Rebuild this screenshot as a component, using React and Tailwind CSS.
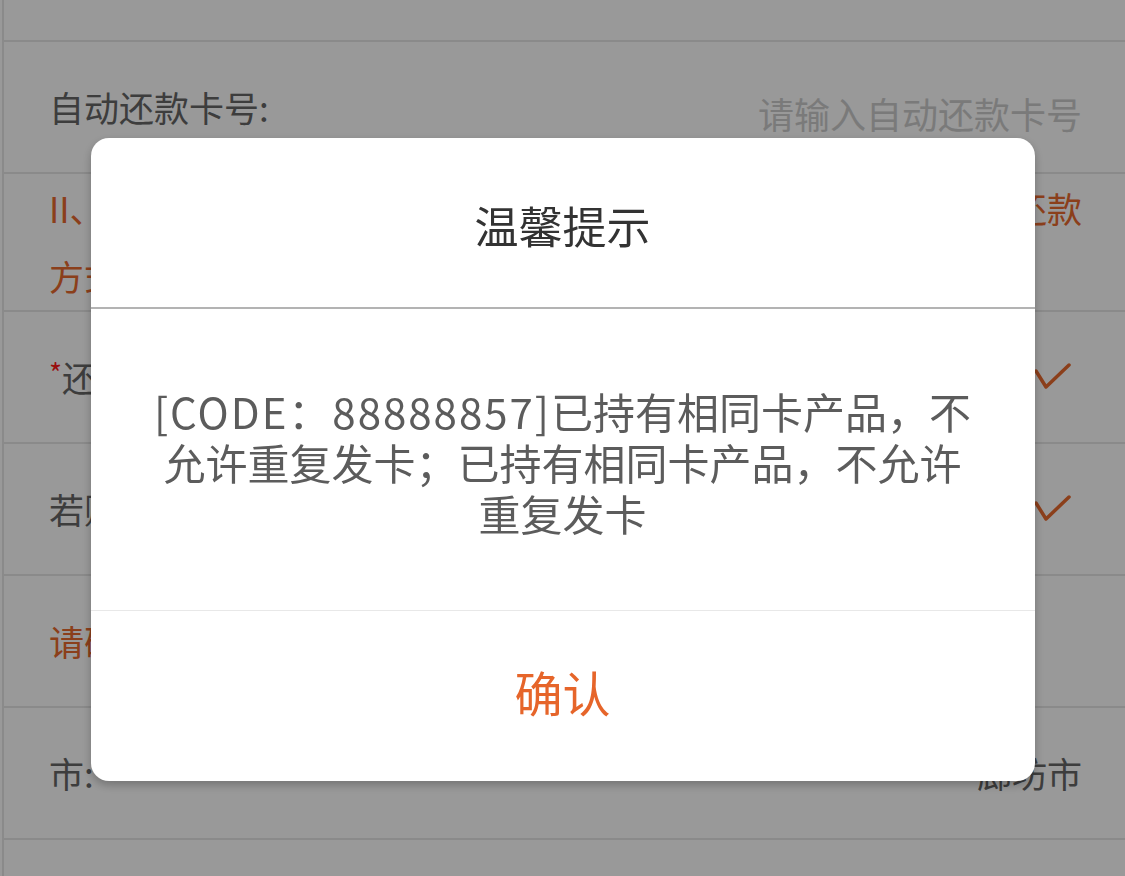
import { useState } from 'react'

const rows = [
  { label: '自动还款卡号:', placeholder: '请输入自动还款卡号' },
]

function CheckMark() {
  return (
    <svg width="38" height="28" viewBox="0 0 38 28" fill="none" className="mr-[10px]">
      <polyline points="2,8 12,24 35,2" stroke="#e8692e" strokeWidth="3.5" strokeLinecap="round" strokeLinejoin="round" />
    </svg>
  )
}

function Row({ children }) {
  return (
    <div className="h-[132px] flex items-center justify-between pl-[45px] pr-[43px] border-b-2 border-[#e6e6e6]">
      {children}
    </div>
  )
}

export default function App() {
  const [open, setOpen] = useState(true)

  return (
    <div className="relative h-[876px] overflow-hidden bg-white font-['Noto_Sans_CJK_SC',sans-serif] text-[35px] text-[#666]">
      <div className="ml-[2px] border-l-2 border-[#e6e6e6] h-full">
        <div className="h-[42px] border-b-2 border-[#e6e6e6]" />

        {rows.map((r) => (
          <Row key={r.label}>
            <span>{r.label}</span>
            <span className="text-[36px] text-[#cccccc] translate-y-[6px]">{r.placeholder}</span>
          </Row>
        ))}

        <div className="h-[138px] pl-[45px] pr-[43px] border-b-2 border-[#e6e6e6] text-[#e8692e] leading-[68px]">
          <div className="flex justify-between">
            <span>II、若需开通自动还款功能，请选择约定</span>
            <span>还款</span>
          </div>
          <div>方式及自动还款卡号</div>
        </div>

        <Row>
          <span>
            <span className="text-[#ff1a1a] text-[28px] align-top">*</span>还款方式:
          </span>
          <CheckMark />
        </Row>

        <Row>
          <span>若账单分期请勾选:</span>
          <CheckMark />
        </Row>

        <Row>
          <span className="text-[#e8692e]">请确认以下地址信息</span>
        </Row>

        <Row>
          <span>市:</span>
          <span>廊坊市</span>
        </Row>
      </div>

      {open && (
        <div className="fixed inset-0 bg-black/40 flex justify-center pt-[138px]">
          <div className="w-[944px] h-[643px] bg-white rounded-[18px] shadow-[0_4px_10px_rgba(0,0,0,0.25)] flex flex-col overflow-hidden">
            <div className="h-[171px] shrink-0 flex items-center justify-center pt-[4px] border-b-2 border-[#b3b3b3] text-[44px] text-[#333]">
              温馨提示
            </div>
            <div className="h-[302px] shrink-0 flex items-center justify-center border-b border-[#e8e8e8]">
              <p className="w-[828px] text-center text-[42px] leading-[51px] text-[#5c5c5c] pt-[4px]">
                <span className="tracking-[2px]">[CODE：88888857]</span>已持有相同卡产品，不允许重复发卡；已持有相同卡产品，不允许重复发卡
              </p>
            </div>
            <button
              onClick={() => setOpen(false)}
              className="flex-1 flex items-center justify-center pb-[10px] text-[48px] text-[#e6652a]"
            >
              确认
            </button>
          </div>
        </div>
      )}
    </div>
  )
}
